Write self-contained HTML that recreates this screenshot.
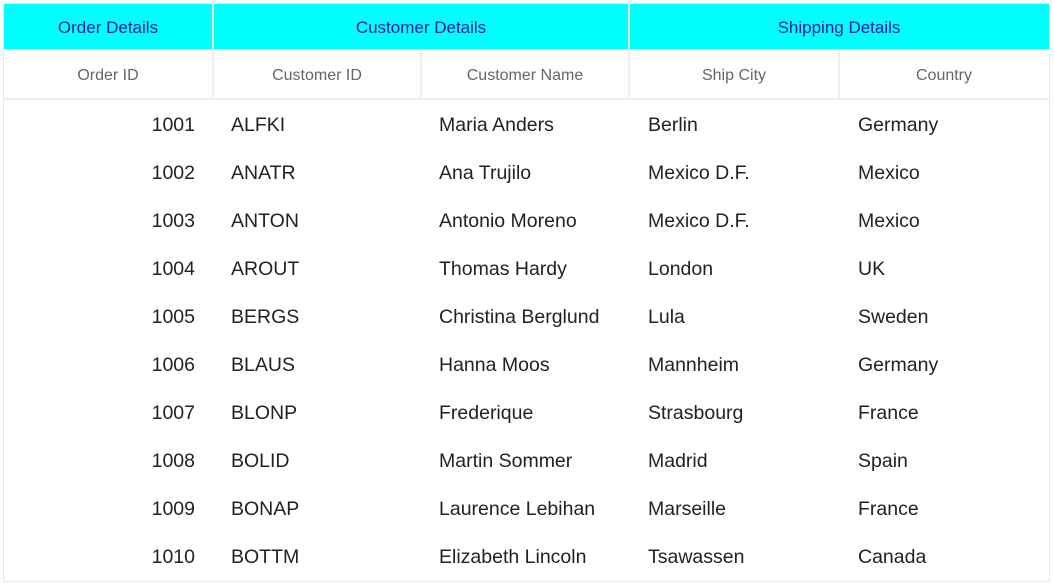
<!DOCTYPE html>
<html><head><style>
body{margin:0;width:1054px;height:586px;background:#fff;font-family:"Liberation Sans",sans-serif;position:relative;overflow:hidden}
.box{position:absolute;left:3px;top:3px;width:1045px;height:577px;border:1px solid #e8e8e8}
.c{position:absolute;box-sizing:border-box;display:flex;align-items:center}
.g{background:#0ff;color:#1a1aa8;font-size:17px;justify-content:center;height:45px;top:5px}
.h{color:#666;font-size:16px;justify-content:center;height:48px;top:52px}
.d{font-size:19.5px;color:#222;height:48px}
.vl{position:absolute;width:2px;background:#eee}
</style></head><body>
<div class="box"></div>
<div style="position:absolute;left:4px;top:4px;width:1045px;height:45px;background:#0ff"></div>
<div class="c g" style="left:4px;width:208px">Order Details</div>
<div class="c g" style="left:214px;width:414px">Customer Details</div>
<div class="c g" style="left:630px;width:418px">Shipping Details</div>
<div class="vl" style="left:212px;top:4px;height:95px;background:#f0f0f0"></div>
<div class="vl" style="left:628px;top:4px;height:95px;background:#f0f0f0"></div>
<div class="vl" style="left:420px;top:51px;height:48px"></div>
<div class="vl" style="left:838px;top:51px;height:48px"></div>
<div style="position:absolute;left:4px;top:49px;width:1045px;height:2px;background:#f0f0f0"></div>
<div style="position:absolute;left:4px;top:98px;width:1045px;height:2px;background:#eee"></div>
<div class="c h" style="left:4px;width:208px">Order ID</div>
<div class="c h" style="left:214px;width:206px">Customer ID</div>
<div class="c h" style="left:422px;width:206px">Customer Name</div>
<div class="c h" style="left:630px;width:208px">Ship City</div>
<div class="c h" style="left:840px;width:208px">Country</div>
<div id="rows"></div>
<script>
var r=[["1001","ALFKI","Maria Anders","Berlin","Germany"],["1002","ANATR","Ana Trujilo","Mexico D.F.","Mexico"],["1003","ANTON","Antonio Moreno","Mexico D.F.","Mexico"],["1004","AROUT","Thomas Hardy","London","UK"],["1005","BERGS","Christina Berglund","Lula","Sweden"],["1006","BLAUS","Hanna Moos","Mannheim","Germany"],["1007","BLONP","Frederique","Strasbourg","France"],["1008","BOLID","Martin Sommer","Madrid","Spain"],["1009","BONAP","Laurence Lebihan","Marseille","France"],["1010","BOTTM","Elizabeth Lincoln","Tsawassen","Canada"]];
var h="",xs=[231,439,648,858];
r.forEach(function(a,i){var t=101+i*48;
h+='<div class="c d" style="top:'+t+'px;left:4px;width:191px;justify-content:flex-end">'+a[0]+'</div>';
for(var j=1;j<5;j++)h+='<div class="c d" style="top:'+t+'px;left:'+xs[j-1]+'px">'+a[j]+'</div>';});
document.getElementById("rows").innerHTML=h;
</script>
</body></html>
